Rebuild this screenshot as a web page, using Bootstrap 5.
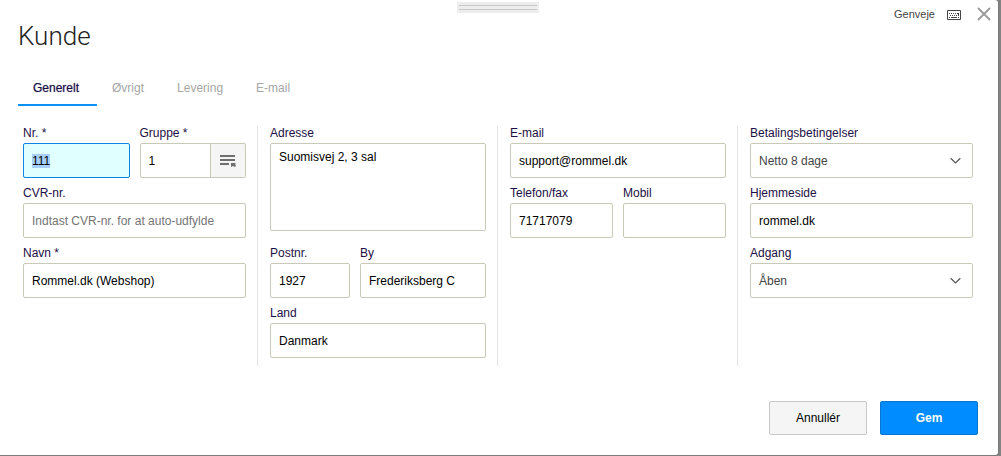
<!DOCTYPE html>
<html lang="da">
<head>
<meta charset="utf-8">
<meta name="viewport" content="width=device-width, initial-scale=1">
<title>Kunde</title>
<link href="https://cdn.jsdelivr.net/npm/bootstrap@5.3.0/dist/css/bootstrap.min.css" rel="stylesheet">
<style>
  body { font-family: "Liberation Sans", Arial, sans-serif; font-size: 12px; line-height: 17px; color: #1c0f45; background: #828483; padding: 0 3px 1px 0; }
  .dialog { background: #fff; border-radius: 0 3px 3px 0; box-shadow: 0 0 2px #666; padding: 2px 20px 20px 18px; }
  .drag-handle { width: 82px; height: 11px; padding: 3px 2px; background: #ededed; border-radius: 1px; }
  .drag-handle span { display: block; height: 1px; background: #c8c8c8; }
  .drag-handle span + span { margin-top: 3px; }
  .tools { top: 6px; right: 7px; gap: 12px; font-size: 11px; }
  .tools a { color: #444; gap: 12px; }
  .tools svg { display: block; }
  .dialog-title { font-family: Roboto, sans-serif; font-weight: 300; font-size: 26px; line-height: 30px; color: #222; margin: 8px 0 22px; }
  .dialog-tabs { border: 0; }
  .dialog-tabs .nav-link { border: 0; border-bottom: 2px solid transparent; border-radius: 0; padding: 7px 18px 7px 15px; color: #a6a6a6; background: none; }
  .dialog-tabs .nav-link.active { color: #1c0f45; border-color: #0a91f5; background: none; text-shadow: 0 0 1px #1c0f4588; }
  .columns { margin-top: 21px; }
  .group { min-width: 0; min-height: 240px; padding: 0 11px 0 12px; border-right: 1px solid #e3e3e3; }
  .group:first-child { padding-left: 5px; }
  .group:last-child { padding-right: 5px; border-right: 0; }
  .pair { gap: 10px; }
  .field { min-width: 0; margin-bottom: 8px; }
  .field-tall { margin-bottom: 15px; }
  .field label { display: block; line-height: 15px; padding-bottom: 2px; white-space: nowrap; }
  .form-control, .form-select { height: 35px; padding: 0 8px; font-size: 12px; line-height: 17px; color: #000; border: 1px solid #c9c9ba; border-radius: 2px; transition: none; }
  textarea.form-control { height: 88px; min-height: 88px; padding-top: 5px; resize: none; display: block; }
  .form-control::placeholder { color: #757575; }
  .form-control:focus { color: #000; background: #e0ffff; border-color: #0a84e8; box-shadow: none; }
  .form-control::selection { color: #000; background: #a6d0fb; }
  .form-select { color: #444; padding-top: 2px; padding-right: 30px; background-size: 11px 11px; background-position: right 11px center;
    background-image: url("data:image/svg+xml,%3Csvg xmlns='http://www.w3.org/2000/svg' viewBox='0 0 11 11'%3E%3Cpath d='M.7 3.3 5.5 8l4.8-4.7' fill='none' stroke='%23555' stroke-width='1.2'/%3E%3C/svg%3E"); }
  .lookup { width: 36px; padding: 0; border: 1px solid #c9c9ba; border-left-color: #dcdcd4; border-radius: 2px; background: #f5f5f5; }
  .postcode { flex: 0 0 80px; }
  .action { width: 98px; height: 34px; padding: 0; font-size: 12px; border-radius: 2px; }
  .action-cancel, .action-cancel:hover { color: #000; background: #f5f5f5; border-color: #c8c8c8; }
  .action-save, .action-save:hover { color: #fff; background: #008cff; border-color: #0876d0; font-weight: 700; }
  .actions { gap: 13px; margin-top: 35px; }
</style>
</head>
<body>
<main class="dialog position-relative">
  <div class="drag-handle mx-auto"><span></span><span></span></div>
  <div class="tools position-absolute d-flex align-items-center">
    <a href="#" class="d-flex align-items-center text-decoration-none">Genveje
      <svg width="14" height="10" viewBox="0 0 14 10" fill="none" stroke="#444" aria-hidden="true"><path d="M.5.5h13v9H.5z"/><path d="M2 3.5h10M3 5.5h9" stroke-dasharray="1 1"/><path d="M11.5 3v3M2 7.5h1M4 7.5h6M11 7.5h1"/></svg>
    </a>
    <button type="button" class="border-0 bg-transparent p-0 ms-1" aria-label="Luk">
      <svg width="14" height="16" viewBox="0 0 14 16" stroke="#999" stroke-width="1.8" aria-hidden="true"><path d="m1 1 12 12m0-12L1 13"/></svg>
    </button>
  </div>
  <h1 class="dialog-title">Kunde</h1>
  <ul class="nav nav-tabs dialog-tabs">
    <li class="nav-item"><a class="nav-link active" aria-current="page" href="#">Generelt</a></li>
    <li class="nav-item"><a class="nav-link" href="#">Øvrigt</a></li>
    <li class="nav-item"><a class="nav-link" href="#">Levering</a></li>
    <li class="nav-item"><a class="nav-link" href="#">E-mail</a></li>
  </ul>
  <form>
    <div class="row row-cols-4 g-0 columns">
      <div class="group">
        <div class="row g-0 flex-nowrap pair">
          <div class="field col"><label for="nr">Nr. *</label><input id="nr" class="form-control" value="111"></div>
          <div class="field col"><label for="gruppe">Gruppe *</label>
            <div class="input-group flex-nowrap">
              <input id="gruppe" class="form-control" value="1">
              <button type="button" class="lookup d-flex align-items-center justify-content-center" aria-label="Vælg gruppe">
                <svg width="18" height="15" viewBox="0 0 18 15" fill="#6f6f6f" aria-hidden="true"><path d="M1 2h15v2H1zM1 6h15v2H1zM1 10h9v2H1zM12 10h5l-1 1 1 2-1 1-2-1-2 1z"/></svg>
              </button>
            </div>
          </div>
        </div>
        <div class="field"><label for="cvr">CVR-nr.</label><input id="cvr" class="form-control" placeholder="Indtast CVR-nr. for at auto-udfylde"></div>
        <div class="field"><label for="navn">Navn *</label><input id="navn" class="form-control" value="Rommel.dk (Webshop)"></div>
      </div>
      <div class="group">
        <div class="field field-tall"><label for="adresse">Adresse</label><textarea id="adresse" class="form-control">Suomisvej 2, 3 sal</textarea></div>
        <div class="row g-0 flex-nowrap pair">
          <div class="field postcode"><label for="postnr">Postnr.</label><input id="postnr" class="form-control" value="1927"></div>
          <div class="field col"><label for="by">By</label><input id="by" class="form-control" value="Frederiksberg C"></div>
        </div>
        <div class="field"><label for="land">Land</label><input id="land" class="form-control" value="Danmark"></div>
      </div>
      <div class="group">
        <div class="field"><label for="email">E-mail</label><input id="email" type="email" class="form-control" value="support@rommel.dk"></div>
        <div class="row g-0 flex-nowrap pair">
          <div class="field col"><label for="telefon">Telefon/fax</label><input id="telefon" class="form-control" value="71717079"></div>
          <div class="field col"><label for="mobil">Mobil</label><input id="mobil" class="form-control"></div>
        </div>
      </div>
      <div class="group">
        <div class="field"><label for="betaling">Betalingsbetingelser</label><select id="betaling" class="form-select"><option>Netto 8 dage</option></select></div>
        <div class="field"><label for="hjemmeside">Hjemmeside</label><input id="hjemmeside" class="form-control" value="rommel.dk"></div>
        <div class="field"><label for="adgang">Adgang</label><select id="adgang" class="form-select"><option>Åben</option></select></div>
      </div>
    </div>
    <div class="actions d-flex justify-content-end">
      <button type="button" class="btn action action-cancel">Annullér</button>
      <button type="submit" class="btn action action-save">Gem</button>
    </div>
  </form>
</main>
<script src="https://cdn.jsdelivr.net/npm/bootstrap@5.3.0/dist/js/bootstrap.bundle.min.js"></script>
<script>
  const nr = document.getElementById('nr');
  nr.focus();
  nr.select();
</script>
</body>
</html>
